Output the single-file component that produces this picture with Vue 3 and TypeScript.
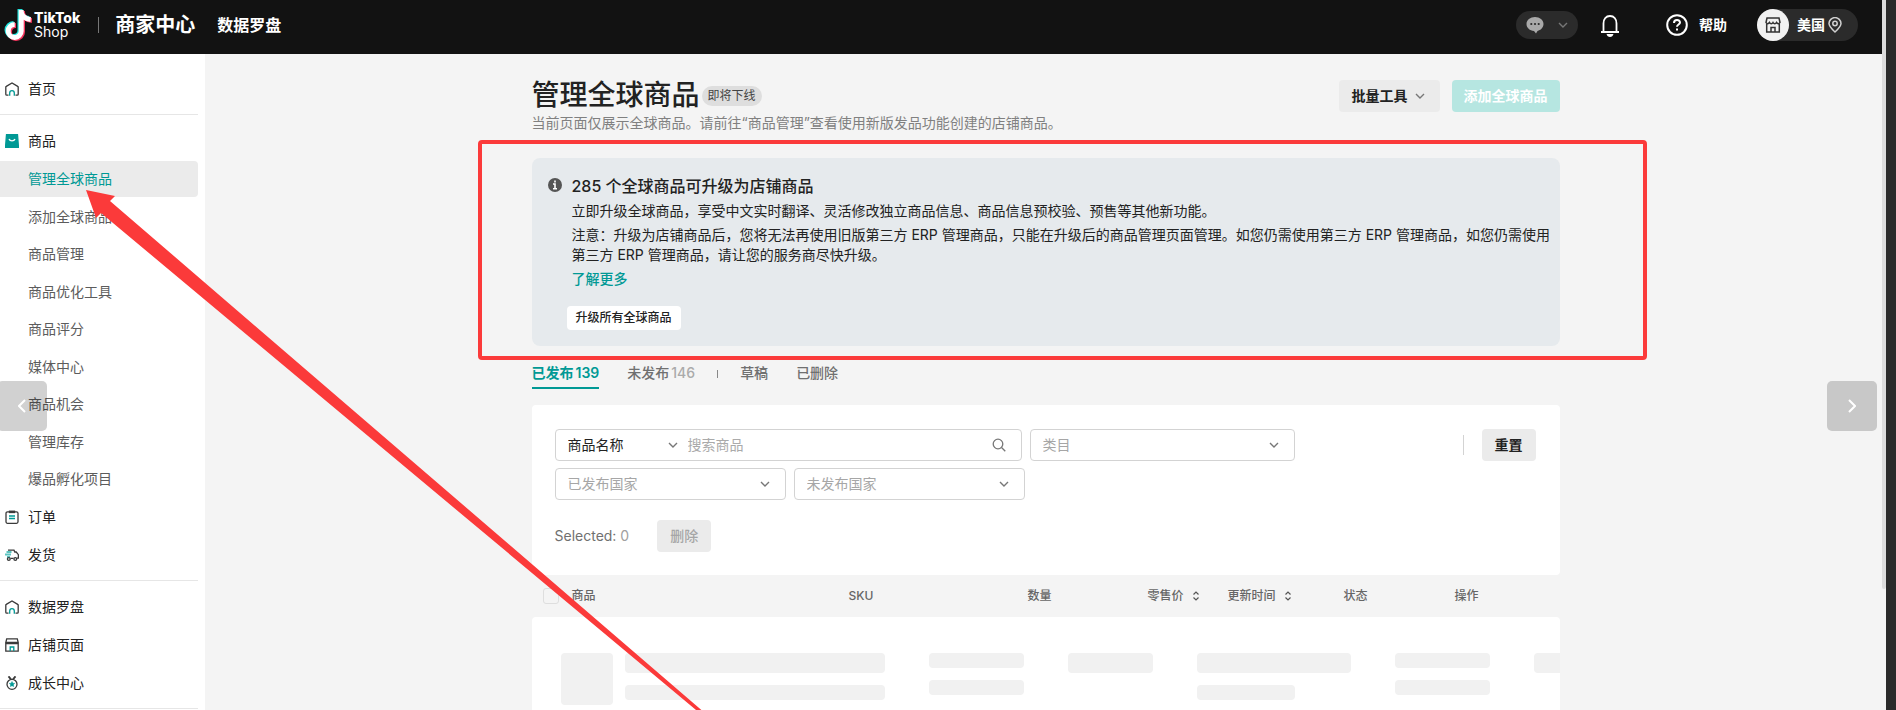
<script setup lang="ts">
import { ref } from 'vue'

type IconName = 'home' | 'bag' | 'order' | 'truck' | 'shop' | 'medal'
interface MenuItem {
  label: string
  icon: IconName
  children?: string[]
}

const sections: MenuItem[][] = [
  [{ label: '首页', icon: 'home' }],
  [
    {
      label: '商品',
      icon: 'bag',
      children: ['管理全球商品', '添加全球商品', '商品管理', '商品优化工具', '商品评分', '媒体中心', '商品机会', '管理库存', '爆品孵化项目'],
    },
    { label: '订单', icon: 'order' },
    { label: '发货', icon: 'truck' },
  ],
  [
    { label: '数据罗盘', icon: 'home' },
    { label: '店铺页面', icon: 'shop' },
    { label: '成长中心', icon: 'medal' },
  ],
]

const active = ref('管理全球商品')
const tab = ref('已发布')
const keyword = ref('')
const allChecked = ref(false)

const columns = [
  { label: '商品', sort: false },
  { label: 'SKU', sort: false },
  { label: '数量', sort: false },
  { label: '零售价', sort: true },
  { label: '更新时间', sort: true },
  { label: '状态', sort: false },
  { label: '操作', sort: false },
]
</script>

<template>
  <div class="app">
    <div class="main">
      <header class="topbar">
        <a class="brand" href="#" aria-label="TikTok Shop">
          <svg class="note" viewBox="0 0 28 32" aria-hidden="true">
            <g fill="none" stroke-width="5">
              <path d="M16 0v21a6.500 6.500 0 1 1-6.500-6.500M16 2c1 5 4 7 9 7.500" stroke="#25e4de" />
              <path d="M18.500 2v21a6.500 6.500 0 1 1-6.500-6.500M18.500 4c1 5 4 7 9.500 7.500" stroke="#f6355d" />
              <path d="M17.200 1v21a6.500 6.500 0 1 1-6.500-6.500M17.200 3c1 5 4 7 9.500 7.500" stroke="#fff" />
            </g>
          </svg>
          <span class="brand-text"><b>TikTok</b><span>Shop</span></span>
        </a>
        <span class="bar"></span>
        <a class="center-name" href="#">商家中心</a>
        <a class="compass" href="#">数据罗盘</a>
        <div class="tools">
          <button class="chat" aria-label="消息">
            <svg width="18" height="18" viewBox="0 0 18 18"><path d="M9 1c4.700 0 8.500 3 8.500 7 0 3.600-2.800 6.300-6 6.900L10 17.500 8 15C3.800 14.700.5 11.800.5 8 .5 4 4.300 1 9 1z" fill="#a9a9a9" /><g fill="#2b2b2b"><circle cx="5.300" cy="8" r="1.100" /><circle cx="9" cy="8" r="1.100" /><circle cx="12.700" cy="8" r="1.100" /></g></svg>
            <svg class="chev" width="10" height="10" viewBox="0 0 10 10"><path d="M1 3l4 4 4-4" /></svg>
          </button>
          <button class="bell" aria-label="通知">
            <svg width="20" height="24" viewBox="0 0 20 24"><path d="M1 18h18M3.500 18V9.500C3.500 5 6 2 10 2s6.500 3 6.500 7.500V18" fill="none" stroke="#fff" stroke-width="1.800" /><path d="M6.500 20h7c-.5 2-1.800 3-3.500 3s-3-1-3.500-3z" fill="#fff" /></svg>
          </button>
          <a class="help" href="#">
            <svg width="22" height="22" viewBox="0 0 22 22" fill="none" stroke="#fff" stroke-width="2"><circle cx="11" cy="11" r="9.800" /><path d="M8 9c0-4 6-3.800 6-.5 0 2-3 2-3 4.300" /><path d="M11 14.500v2" /></svg>
            帮助
          </a>
          <button class="region">
            <span class="avatar">
              <svg width="16" height="16" viewBox="0 0 16 16" fill="none" stroke="#333" stroke-width="1.500"><path d="M2 1h12l1 4.500c-.8 1.500-2.600 1.500-3.500 0-.8 1.500-2.700 1.500-3.500 0-.8 1.500-2.700 1.500-3.500 0C3.600 7 1.800 7 1 5.500zM1.700 7v8h12.600V7M6 15v-4.500h4V15" /></svg>
            </span>
            美国
            <svg width="14" height="16" viewBox="0 0 14 16" fill="none" stroke="#d0d0d0" stroke-width="1.500"><path d="M7 15C3 11.500 1 9.200 1 6.600a6 6 0 0 1 12 0C13 9.200 11 11.500 7 15z" /><circle cx="7" cy="6.500" r="2.200" /></svg>
          </button>
        </div>
      </header>

      <div class="body">
        <nav class="sidebar">
          <section v-for="(group, g) in sections" :key="g">
            <template v-for="item in group" :key="item.label">
              <a class="item" href="#">
                <svg width="14" height="14" viewBox="0 0 14 14" fill="none" stroke="#3a3a3a" stroke-width="1.300" aria-hidden="true">
                  <template v-if="item.icon === 'home'">
                    <path d="M3.500 13.200H1.800a1 1 0 0 1-1-1V5.300a1 1 0 0 1 .5-.9L7 .9l5.700 3.500a1 1 0 0 1 .5.9v6.900a1 1 0 0 1-1 1h-1.700" />
                    <path d="M4.700 13.800V11a2.300 2.300 0 0 1 4.600 0v2.800" stroke="#009995" />
                  </template>
                  <template v-else-if="item.icon === 'bag'">
                    <path d="M1.500.5h11L13.500 13.500H.5z" fill="#009995" stroke="#009995" stroke-linejoin="round" />
                    <path d="M4 5c1 2.400 5 2.400 6 0" stroke="#fff" />
                  </template>
                  <template v-else-if="item.icon === 'order'">
                    <rect x="1" y="1.800" width="12" height="11.500" rx="1.500" />
                    <path d="M4.500 1.200h5v1.300h-5z" />
                    <path d="M4 6h6M4 8.500h6" stroke="#009995" />
                  </template>
                  <template v-else-if="item.icon === 'truck'">
                    <path d="M1.500 4h5M0 6.500h6M2 9h3" stroke="#5cc4c0" stroke-width="2" />
                    <path d="M3 2.200h6l.8 1.800h1.400l2.200 2.700v3.500H12M8.500 10.300h-3" />
                    <circle cx="3.800" cy="11" r="1.400" />
                    <circle cx="10.300" cy="11" r="1.400" />
                  </template>
                  <template v-else-if="item.icon === 'shop'">
                    <path d="M1.700.8h10.600l.9 3.700H.8zM.8 5v8.200h12.400V5M.8 5.500h12.400" />
                    <path d="M5.200 13V9h3.600v4" stroke="#009995" />
                  </template>
                  <template v-else>
                    <circle cx="7" cy="8.300" r="5" />
                    <path d="M3.500.3 6 3.300M10.500.3 8 3.300" stroke-width="1.800" />
                    <path d="M7 5.500l.8 1.700 1.900.2-1.400 1.300.4 1.900L7 9.700l-1.700.9.4-1.900-1.400-1.300 1.900-.2z" fill="#009995" stroke="#009995" stroke-width=".5" />
                  </template>
                </svg>
                {{ item.label }}
              </a>
              <div v-if="item.children" class="sub">
                <a v-for="c in item.children" :key="c" class="child" :class="{ on: c === active }" href="#" @click.prevent="active = c">{{ c }}</a>
              </div>
            </template>
          </section>
        </nav>

        <main class="content">
          <div class="head">
            <div>
              <div class="title-row">
                <h1>管理全球商品</h1>
                <span class="badge">即将下线</span>
              </div>
              <p class="hint">当前页面仅展示全球商品。请前往“商品管理”查看使用新版发品功能创建的店铺商品。</p>
            </div>
            <div class="actions">
              <button class="btn gray">批量工具 <svg class="chev" width="10" height="10" viewBox="0 0 10 10"><path d="M1 3l4 4 4-4" /></svg></button>
              <button class="btn teal">添加全球商品</button>
            </div>
          </div>

          <section class="notice">
            <svg class="info" width="14" height="14" viewBox="0 0 14 14" aria-hidden="true"><circle cx="7" cy="7" r="7" fill="#555" /><path d="M7 2.500v2M5 6h2v5M5 10.700h4" stroke="#fff" stroke-width="1.600" fill="none" /></svg>
            <div>
              <h2>285 个全球商品可升级为店铺商品</h2>
              <p>立即升级全球商品，享受中文实时翻译、灵活修改独立商品信息、商品信息预校验、预售等其他新功能。</p>
              <p>注意：升级为店铺商品后，您将无法再使用旧版第三方 ERP 管理商品，只能在升级后的商品管理页面管理。如您仍需使用第三方 ERP 管理商品，如您仍需使用<br />第三方 ERP 管理商品，请让您的服务商尽快升级。</p>
              <a class="more" href="#">了解更多</a>
              <button class="upgrade">升级所有全球商品</button>
            </div>
            <span class="mark-box"></span>
          </section>

          <div class="tabs">
            <button :class="{ on: tab === '已发布' }" @click="tab = '已发布'">已发布<span>139</span></button>
            <button :class="{ on: tab === '未发布' }" @click="tab = '未发布'">未发布<span>146</span></button>
            <i></i>
            <button :class="{ on: tab === '草稿' }" @click="tab = '草稿'">草稿</button>
            <button :class="{ on: tab === '已删除' }" @click="tab = '已删除'">已删除</button>
          </div>

          <section class="filters">
            <div class="line">
              <div class="field search">
                <label class="pick">
                  <select aria-label="搜索字段"><option>商品名称</option></select>
                  <svg class="chev" width="10" height="10" viewBox="0 0 10 10"><path d="M1 3l4 4 4-4" /></svg>
                </label>
                <input v-model="keyword" type="text" placeholder="搜索商品" aria-label="搜索商品" />
                <svg width="14" height="14" viewBox="0 0 14 14" fill="none" stroke="#777" stroke-width="1.300"><circle cx="6" cy="6" r="4.800" /><path d="M9.500 9.500l3.800 3.800" /></svg>
              </div>
              <label class="field pick wide">
                <select aria-label="类目" class="empty"><option>类目</option></select>
                <svg class="chev" width="10" height="10" viewBox="0 0 10 10"><path d="M1 3l4 4 4-4" /></svg>
              </label>
              <div class="reset"><i></i><button class="btn gray">重置</button></div>
            </div>
            <div class="line">
              <label class="field pick country">
                <select aria-label="已发布国家" class="empty"><option>已发布国家</option></select>
                <svg class="chev" width="10" height="10" viewBox="0 0 10 10"><path d="M1 3l4 4 4-4" /></svg>
              </label>
              <label class="field pick country">
                <select aria-label="未发布国家" class="empty"><option>未发布国家</option></select>
                <svg class="chev" width="10" height="10" viewBox="0 0 10 10"><path d="M1 3l4 4 4-4" /></svg>
              </label>
            </div>
            <div class="bulk">
              <span>Selected: <em>0</em></span>
              <button class="btn off" disabled>删除</button>
            </div>
          </section>

          <table>
            <colgroup>
              <col class="c0" /><col class="c1" /><col class="c2" /><col class="c3" /><col class="c4" /><col class="c5" /><col class="c6" /><col />
            </colgroup>
            <thead>
              <tr>
                <th class="tick"><input v-model="allChecked" type="checkbox" aria-label="全选" /></th>
                <th v-for="c in columns" :key="c.label" scope="col">
                  {{ c.label }}<svg v-if="c.sort" width="6" height="10" viewBox="0 0 6 10" fill="none" stroke="#555" stroke-width="1.200"><path d="M.5 3.500L3 1l2.500 2.500M.5 6.500L3 9l2.500-2.500" /></svg>
                </th>
              </tr>
            </thead>
            <tbody>
              <tr>
                <td colspan="8">
                  <div class="skeleton">
                    <div class="product"><i class="thumb"></i><div class="stack w-name"><i class="tall"></i><i></i></div></div>
                    <div class="stack w-sku"><i></i><i></i></div>
                    <div class="stack w-qty"><i class="tall"></i></div>
                    <div class="stack w-price"><i class="tall"></i><i class="short"></i></div>
                    <div class="stack w-sku"><i></i><i></i></div>
                    <div class="stack w-qty"><i class="tall"></i></div>
                  </div>
                </td>
              </tr>
            </tbody>
          </table>
        </main>
      </div>

      <button class="slide prev" aria-label="上一张"><svg width="8" height="14" viewBox="0 0 8 14"><path d="M7 1L1 7l6 6" /></svg></button>
      <button class="slide next" aria-label="下一张"><svg width="8" height="14" viewBox="0 0 8 14"><path d="M1 1l6 6-6 6" /></svg></button>
      <span class="scroll"></span>
    </div>
    <div class="edge"></div>
    <svg class="arrow" width="710" height="720" viewBox="0 0 710 720" aria-hidden="true">
      <path d="M86 190l29 6-5 5L713 720h-5L101 213l-5 5z" fill="#fb3a3a" />
    </svg>
  </div>
</template>

<style>
body {
  margin: 0;
}
</style>

<style scoped>
* {
  box-sizing: border-box;
}
.app {
  position: relative;
  display: flex;
  height: 100vh;
  overflow: hidden;
  background: #f4f4f4;
  color: #222;
  font: 14px/20px Inter, "Noto Sans CJK SC", sans-serif;
}
.main {
  position: relative;
  flex: 1;
  min-width: 0;
  display: flex;
  flex-direction: column;
}
.scroll {
  position: absolute;
  top: 0;
  right: 0;
  width: 4px;
  height: 83%;
  border-radius: 0 0 2px 2px;
  background: #dcdcdc;
}
.edge {
  width: 10px;
  background: #2a2a2a;
}
a {
  color: inherit;
  text-decoration: none;
}
button {
  font: inherit;
  color: inherit;
  border: 0;
  padding: 0;
  background: none;
  cursor: pointer;
}
svg {
  flex: none;
}
h1,
h2,
p {
  margin: 0;
}
.chev {
  fill: none;
  stroke: #777;
  stroke-width: 1.4;
}

/* top bar */
.topbar {
  flex: none;
  height: 54px;
  display: flex;
  align-items: center;
  padding: 0 28px 5px 4px;
  background: #121212;
  color: #fff;
}
.brand {
  display: flex;
  align-items: center;
  gap: 2px;
}
.note {
  width: 28px;
  height: 32px;
}
.brand-text {
  display: flex;
  flex-direction: column;
  font-size: 14px;
  line-height: 14px;
}
.brand-text b {
  font-weight: 800;
}
.bar {
  width: 1px;
  height: 16px;
  margin: 0 16px 0 18px;
  background: #777;
}
.center-name {
  font-size: 20px;
  font-weight: 700;
}
.compass {
  margin-left: 22px;
  font-size: 16px;
  font-weight: 700;
}
.tools {
  display: flex;
  align-items: center;
  margin-left: auto;
  font-weight: 700;
}
.chat {
  display: flex;
  align-items: center;
  justify-content: space-between;
  width: 62px;
  height: 28px;
  padding: 0 10px;
  border-radius: 14px;
  background: #2b2b2b;
}
.bell {
  display: flex;
  margin: 2px 46px 0 22px;
}
.help {
  display: flex;
  align-items: center;
  gap: 11px;
}
.region {
  display: flex;
  align-items: center;
  gap: 3px;
  width: 101px;
  height: 32px;
  margin-left: 30px;
  border-radius: 16px;
  background: #2b2b2b;
}
.avatar {
  display: grid;
  place-items: center;
  width: 32px;
  height: 32px;
  margin-right: 5px;
  border-radius: 50%;
  background: #f1f1f1;
}

/* side menu */
.body {
  flex: 1;
  min-height: 0;
  display: flex;
}
.sidebar {
  flex: none;
  width: 205px;
  padding: 9px 7px 0 0;
  background: #fff;
}
.sidebar section {
  display: flex;
  flex-direction: column;
  gap: 2px;
  padding: 8px 0 7px;
  border-bottom: 1px solid #e6e6e6;
}
.item,
.child {
  display: flex;
  align-items: center;
  height: 36px;
}
.item {
  gap: 9px;
  padding-left: 5px;
}
.sub {
  display: flex;
  flex-direction: column;
  justify-content: space-between;
  height: 336px;
}
.child {
  padding-left: 28px;
  border-radius: 0 4px 4px 0;
  color: #5c5c5c;
}
.child.on {
  background: #ebebeb;
  color: #009995;
}

/* content */
.content {
  flex: 1;
  min-width: 0;
  max-width: 1028px;
  margin: 0 auto;
  padding-top: 24px;
}
.head {
  display: flex;
  justify-content: space-between;
}
.title-row {
  display: flex;
  align-items: center;
  gap: 2px;
}
h1 {
  font-size: 28px;
  line-height: 34px;
  font-weight: 500;
}
.badge {
  margin-top: 2px;
  padding: 0 6px;
  border-radius: 10px;
  background: #dedede;
  color: #444;
  font-size: 12px;
}
.hint {
  margin-top: 1px;
  color: #808080;
}
.actions {
  display: flex;
  gap: 12px;
  padding-top: 2px;
}
.btn {
  display: flex;
  align-items: center;
  gap: 7px;
  height: 32px;
  padding: 0 13px;
  border-radius: 4px;
  font-weight: 600;
}
.gray {
  background: #ebebeb;
}
.actions .gray {
  padding-right: 15px;
}
.teal {
  background: #b6e6e1;
  color: #fff;
}
.actions .teal {
  padding: 0 12px;
}
.notice {
  position: relative;
  display: flex;
  gap: 10px;
  margin-top: 25px;
  padding: 16px;
  border-radius: 8px;
  background: #e6eaed;
}
.info {
  margin-top: 4px;
}
h2 {
  font-size: 16px;
  line-height: 24px;
  font-weight: 500;
}
.notice p {
  margin-top: 4px;
  white-space: nowrap;
}
.notice h2 + p {
  margin-top: 3px;
}
.more {
  display: block;
  width: max-content;
  margin-top: 4px;
  color: #009995;
  font-weight: 500;
}
.upgrade {
  margin: 17px 0 0 -5px;
  height: 24px;
  padding: 0 9px;
  border-radius: 4px;
  background: #fff;
  font-size: 12px;
  font-weight: 500;
}
.mark-box {
  position: absolute;
  inset: -18px -87px -14px -54px;
  border: 4px solid #fb3a3a;
  border-radius: 4px;
  pointer-events: none;
}
.tabs {
  display: flex;
  align-items: center;
  margin-top: 17px;
  gap: 28px;
}
.tabs button {
  height: 26px;
  padding-bottom: 4px;
  border-bottom: 2px solid transparent;
  color: #707070;
  font-weight: 500;
}
.tabs button span {
  margin-left: 2px;
  color: #aaa;
}
.tabs .on,
.tabs .on span {
  color: #009995;
  font-weight: 600;
}
.tabs .on {
  border-color: #009995;
}
.tabs i {
  width: 1px;
  height: 8px;
  margin: 0 -6px 4px;
  background: #888;
}
.filters {
  margin-top: 16px;
  padding: 24px 24px 23px 23px;
  border-radius: 4px;
  background: #fff;
}
.line {
  display: flex;
  gap: 8px;
  margin-bottom: 7px;
}
.field {
  height: 32px;
  border: 1px solid #d3d3d3;
  border-radius: 4px;
}
.search {
  display: flex;
  align-items: center;
  width: 467px;
  padding-right: 15px;
}
.search .pick {
  width: 132px;
}
.search input {
  flex: 1;
  min-width: 0;
  border: 0;
  padding: 0;
  background: none;
  font: inherit;
  outline: 0;
}
.search input::placeholder {
  color: #aaa;
}
.pick {
  display: flex;
  align-items: center;
}
.pick select {
  flex: 1;
  min-width: 0;
  appearance: none;
  border: 0;
  padding: 0 0 0 12px;
  background: none;
  font: inherit;
  color: #222;
}
.pick select.empty {
  color: #a6a6a6;
}
.pick .chev {
  margin-right: 15px;
}
.search .pick .chev {
  margin-right: 10px;
}
.wide {
  width: 265px;
}
.country {
  width: 231px;
}
.reset {
  display: flex;
  align-items: center;
  gap: 18px;
  margin-left: auto;
}
.reset i {
  width: 1px;
  height: 20px;
  background: #d3d3d3;
}
.bulk {
  display: flex;
  align-items: center;
  gap: 28px;
  margin-top: 20px;
  color: #707070;
}
.bulk em {
  color: #a0a0a0;
  font-style: normal;
}
.off {
  background: #ebebeb;
  color: #a6a6a6;
  font-weight: 500;
}

/* product table */
table {
  width: 100%;
  table-layout: fixed;
  border-collapse: collapse;
}
.c0 { width: 40px; }
.c1 { width: 277px; }
.c2 { width: 179px; }
.c3 { width: 120px; }
.c4 { width: 80px; }
.c5 { width: 116px; }
.c6 { width: 111px; }
th {
  height: 42px;
  padding: 0;
  text-align: left;
  font-size: 12px;
  font-weight: 500;
  color: #666;
}
th svg {
  margin-left: 9px;
  vertical-align: -1px;
}
.tick input {
  display: block;
  appearance: none;
  width: 16px;
  height: 16px;
  margin: 0 0 0 11px;
  border: 1px solid #dedede;
  border-radius: 3px;
}
td {
  padding: 0;
}
.skeleton {
  display: flex;
  gap: 44px;
  height: 160px;
  overflow: hidden;
  padding: 36px 0 0 29px;
  border-radius: 4px 4px 0 0;
  background: #fff;
}
.product {
  display: flex;
  flex: none;
  gap: 12px;
}
.skeleton i {
  display: block;
  height: 15px;
  border-radius: 4px;
  background: #f1f1f1;
}
.skeleton i.tall {
  height: 20px;
}
.skeleton i.short {
  width: 98px;
}
.skeleton i.thumb {
  width: 52px;
  height: 52px;
}
.stack {
  flex: none;
  display: flex;
  flex-direction: column;
  gap: 12px;
}
.w-name { width: 260px; }
.w-sku { width: 95px; }
.w-qty { width: 85px; }
.w-price { width: 154px; }

/* overlays */
.slide {
  position: absolute;
  top: 381px;
  width: 50px;
  height: 50px;
  display: grid;
  place-items: center;
  border-radius: 5px;
  background: rgba(0, 0, 0, 0.18);
}
.slide svg {
  fill: none;
  stroke: #fff;
  stroke-width: 2;
}
.prev {
  left: -3px;
}
.next {
  right: 9px;
}
.arrow {
  position: absolute;
  left: 0;
  top: 0;
  pointer-events: none;
}
</style>
